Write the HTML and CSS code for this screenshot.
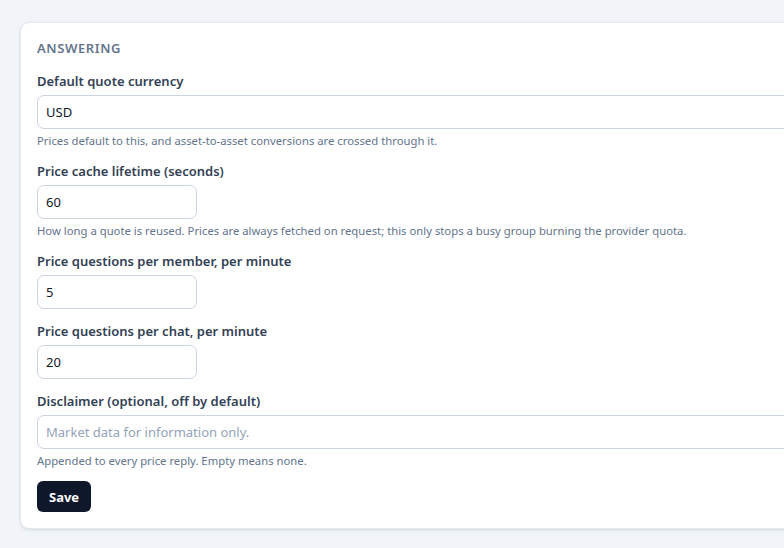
FILE: index.html
```html
<!DOCTYPE html>
<html>
<head>
    <meta name="viewport" content="width=device-width, initial-scale=1.0">
    <title>Settings</title>
    <link rel="stylesheet" href="styles.css">
</head>
<body>
    <main class="page">
        <!-- Answering settings -->
        <form class="card">
            <h2 class="section-title">ANSWERING</h2>

            <div class="field">
                <label for="currency">Default quote currency</label>
                <input type="text" id="currency" class="input" value="USD">
                <p class="help">Prices default to this, and asset-to-asset conversions are crossed through it.</p>
            </div>

            <div class="field">
                <label for="cacheTtl">Price cache lifetime (seconds)</label>
                <input type="text" id="cacheTtl" class="input input-short" value="60">
                <p class="help">How long a quote is reused. Prices are always fetched on request; this only stops a busy group burning the provider quota.</p>
            </div>

            <div class="field">
                <label for="perMember">Price questions per member, per minute</label>
                <input type="text" id="perMember" class="input input-short" value="5">
            </div>

            <div class="field">
                <label for="perChat">Price questions per chat, per minute</label>
                <input type="text" id="perChat" class="input input-short" value="20">
            </div>

            <div class="field">
                <label for="disclaimer">Disclaimer (optional, off by default)</label>
                <input type="text" id="disclaimer" class="input" placeholder="Market data for information only.">
                <p class="help">Appended to every price reply. Empty means none.</p>
            </div>

            <button type="button" class="btn-save">Save</button>
        </form>
    </main>
</body>
</html>
```

FILE: styles.css
```css
html, body {
    margin: 0;
    padding: 0;
    overflow: hidden;
}

body {
    font-family: "Noto Sans", "Open Sans", Arial, sans-serif;
    background-color: #f1f5f9;
    color: #334155;
}

.page {
    width: 980px;
    padding: 22px 20px;
}

.card {
    background: #fff;
    border: 1px solid #e2e8f0;
    border-radius: 9px;
    padding: 16px;
    box-shadow: 0 1px 3px rgba(15, 23, 42, 0.12);
}

.section-title {
    margin: 0 0 14px;
    font-size: 13px;
    line-height: 18px;
    font-weight: 600;
    letter-spacing: 0.6px;
    color: #64748b;
}

.field {
    margin-bottom: 12px;
}

.field label {
    display: block;
    font-size: 13px;
    line-height: 20px;
    font-weight: 600;
    color: #334155;
    margin-bottom: 4px;
}

.input {
    display: block;
    box-sizing: border-box;
    width: 100%;
    height: 34px;
    padding: 0 8px;
    border: 1px solid #cbd5e1;
    border-radius: 7px;
    font-family: inherit;
    font-size: 13px;
    color: #0f172a;
    background: #fff;
    outline: none;
}

.input::placeholder {
    color: #94a3b8;
}

.input-short {
    width: 160px;
}

.help {
    margin: 4px 0 0;
    font-size: 11.3px;
    line-height: 16px;
    color: #64748b;
}

.btn-save {
    display: block;
    height: 31px;
    padding: 0 12px;
    border: none;
    border-radius: 6px;
    background: #0f172a;
    color: #fff;
    font-family: inherit;
    font-size: 13px;
    font-weight: 700;
    cursor: pointer;
}
```
